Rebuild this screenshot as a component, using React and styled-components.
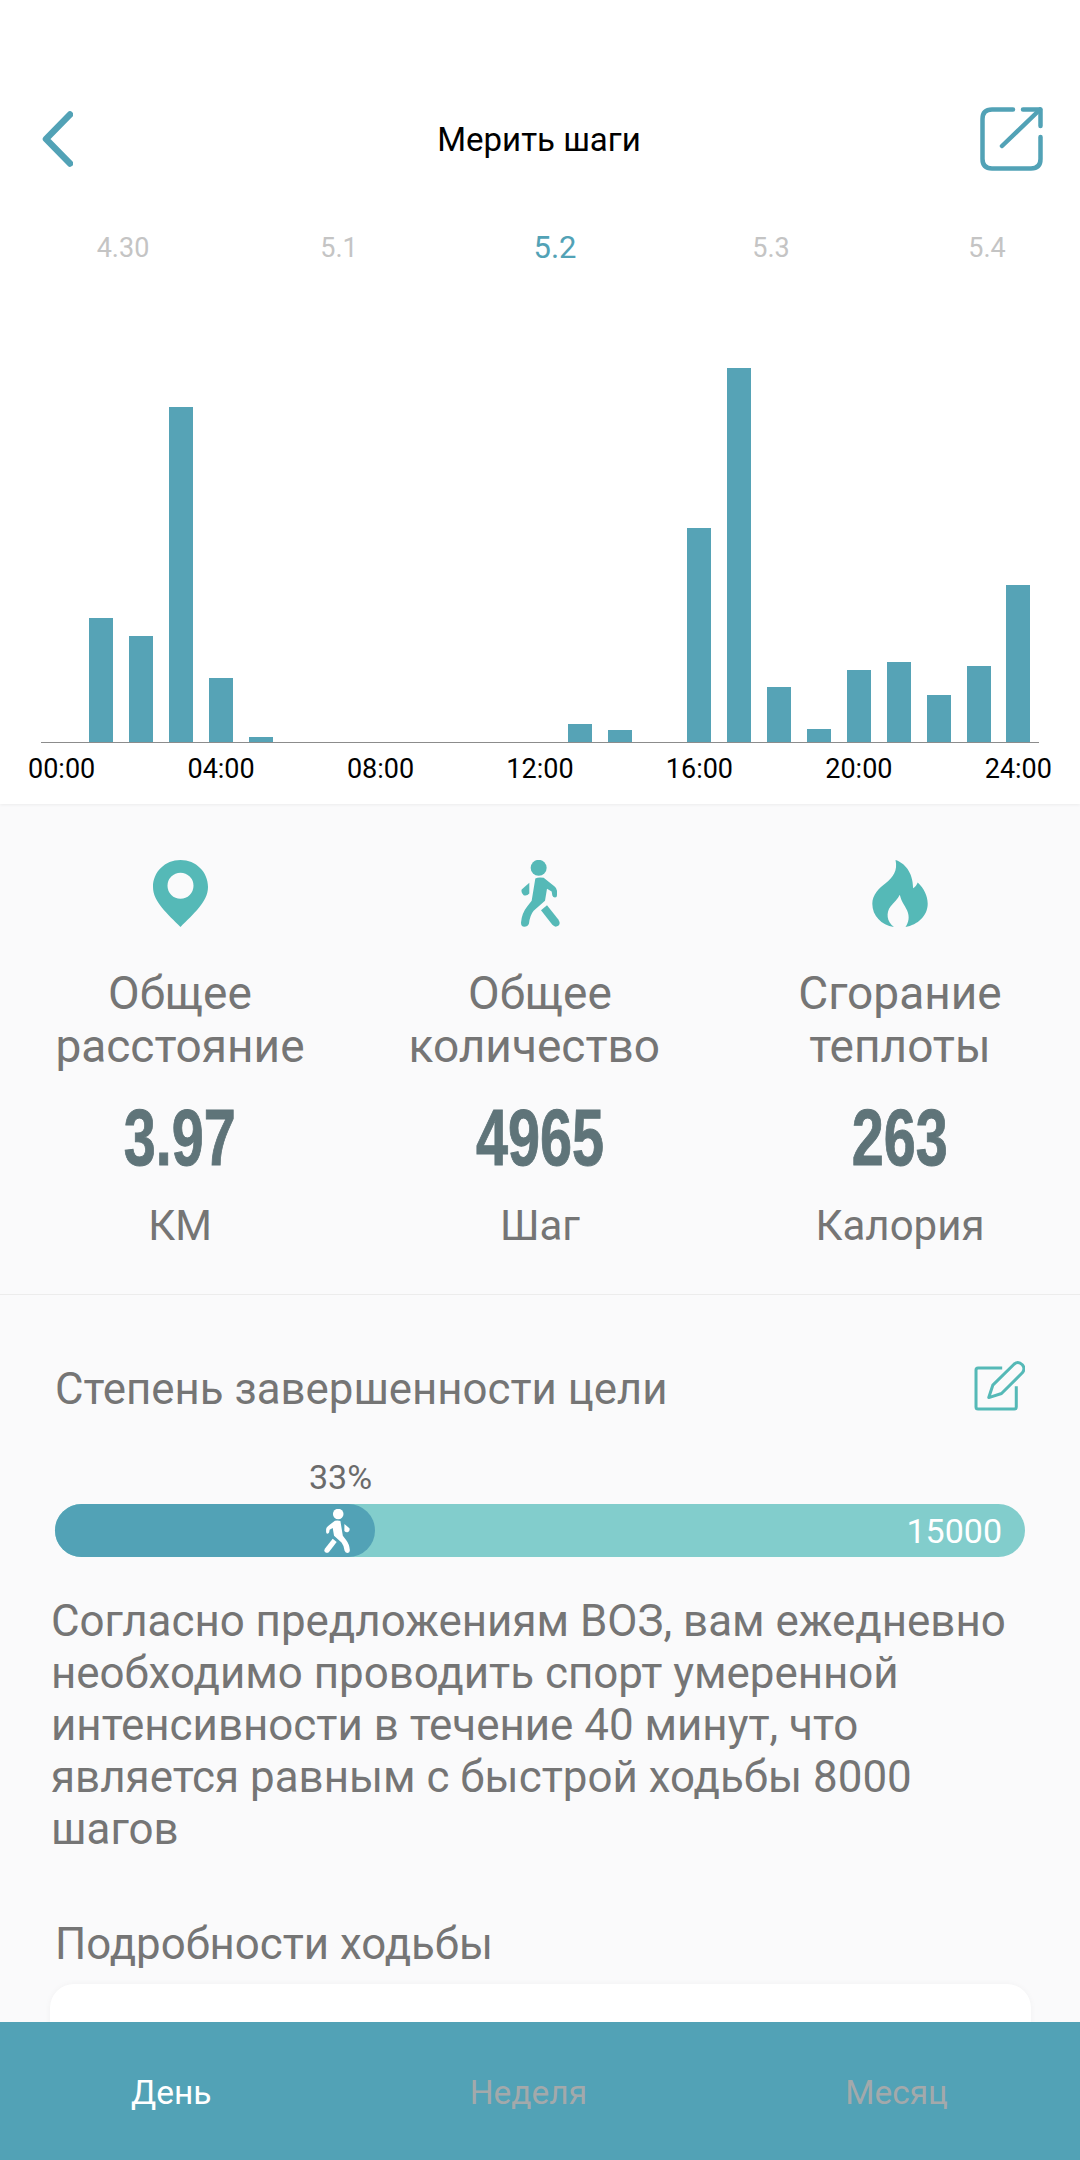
import React from 'react'
import styled, { createGlobalStyle } from 'styled-components'

const TEAL = '#52a2b6'
const MINT = '#55b9b7'

const GlobalStyle = createGlobalStyle`
    html, body {
        margin: 0;
        padding: 0;
        background: #fafafb;
        font-family: Roboto, "Noto Sans", sans-serif;
    }
`

const Screen = styled.div`
    display: flex;
    flex-direction: column;
    width: 1080px;
    height: 2160px;
    overflow: hidden;
    background: #fafafb;
`

const Scroll = styled.div`
    flex: 1;
    min-height: 0;
    overflow: hidden;
`

const TopPanel = styled.section`
    position: relative;
    padding: 106px 0 19px;
    background: #fff;
    box-shadow: 0 1px 3px rgba(0, 0, 0, 0.06);
`

const Header = styled.header`
    display: grid;
    grid-template-columns: 1fr auto 1fr;
    align-items: center;
    height: 65px;
    padding: 0 44px 0 42px;
`

const Title = styled.h1`
    margin: 0;
    padding-top: 2px;
    color: #000;
    font-size: 33px;
    font-weight: 400;
`

const ShareWrap = styled.div`
    display: flex;
    justify-content: flex-end;
    margin-right: -7px;
`

const Dates = styled.div`
    display: flex;
    margin-top: 57px;
    padding-left: 15px;
    overflow: hidden;
`

const DateCell = styled.div`
    flex: 0 0 216px;
    height: 40px;
    line-height: 40px;
    text-align: center;
    color: ${props => props.$active ? TEAL : '#c4c4c4'};
    font-size: ${props => props.$active ? '31px' : '27px'};
`

const Bars = styled.div`
    display: flex;
    align-items: flex-end;
    gap: 15.9px;
    height: 374px;
    margin: 100px 41px 0;
    padding-left: 48px;
    border-bottom: 1px solid #8c8c8c;
`

const Bar = styled.div`
    flex: 0 0 24px;
    background: #56a3b6;
`

const AxisLabels = styled.div`
    display: flex;
    justify-content: space-between;
    margin-top: 10px;
    padding: 0 28px;
    color: #000;
    font-size: 27px;
    line-height: 32px;
`

const Stats = styled.section`
    display: grid;
    grid-template-columns: repeat(3, 1fr);
    padding: 56px 0 41px;
    border-bottom: 1px solid #ececec;
`

const Stat = styled.div`
    display: flex;
    flex-direction: column;
    align-items: center;
`

const IconSlot = styled.div`
    display: flex;
    align-items: center;
    justify-content: center;
    height: 67px;
    margin-bottom: 40px;
`

const StatLabel = styled.div`
    color: #757575;
    font-size: 46px;
    line-height: 53px;
    text-align: center;
    white-space: pre;
`

const StatValue = styled.div`
    display: flex;
    align-items: center;
    justify-content: center;
    box-sizing: border-box;
    height: 126px;
    padding-top: 4px;
    color: #5f7479;
    font-family: "Liberation Sans", sans-serif;
    font-size: 80px;
    font-weight: 700;
    -webkit-text-stroke: 1px #5f7479;
    transform: scaleX(0.72);
`

const StatUnit = styled.div`
    color: #757575;
    font-size: 42px;
    line-height: 54px;
`

const Goal = styled.section`
    padding: 67px 55px 0;
`

const GoalHead = styled.div`
    display: flex;
    align-items: center;
    justify-content: space-between;
    height: 54px;
`

const SectionTitle = styled.h2`
    margin: 0;
    color: #757575;
    font-size: 43.8px;
    font-weight: 400;
    line-height: 54px;
`

const Percent = styled.div`
    width: ${props => props.$value}%;
    margin-top: 43px;
    padding-right: 3px;
    box-sizing: border-box;
    color: #6b6b6b;
    font-size: 34px;
    line-height: 36px;
    text-align: right;
`

const Track = styled.div`
    display: flex;
    align-items: center;
    height: 53px;
    margin-top: 9px;
    border-radius: 27px;
    background: #82cdcc;
    color: #fff;
    font-size: 34px;
`

const Fill = styled.div`
    display: flex;
    align-items: center;
    justify-content: flex-end;
    box-sizing: border-box;
    width: ${props => props.$value}%;
    height: 100%;
    padding-right: 24px;
    border-radius: 27px;
    background: ${TEAL};
`

const Total = styled.span`
    margin-left: auto;
    padding-right: 23px;
`

const Advice = styled.p`
    margin: 38px 0 0 -4px;
    color: #757575;
    font-size: 43.9px;
    line-height: 52px;
`

const Details = styled.section`
    padding: 62px 49px 0 50px;
`

const DetailsTitle = styled(SectionTitle)`
    padding-left: 5px;
`

const Card = styled.div`
    height: 120px;
    margin-top: 13px;
    border-radius: 24px;
    background: #fff;
    box-shadow: 0 0 6px rgba(0, 0, 0, 0.04);
`

const TabBar = styled.nav`
    display: flex;
    flex: 0 0 138px;
    align-items: center;
    justify-content: space-between;
    padding: 2px 132px 0 131px;
    box-sizing: border-box;
    background: ${TEAL};
    font-size: 33.5px;
`

const Tab = styled.div`
    color: ${props => props.$active ? '#fff' : '#a3a9ab'};
`

const Walker = styled.svg`
    display: block;
    width: ${props => props.$w}px;
    height: ${props => props.$h}px;
    transform: ${props => props.$flip ? 'scaleX(-1)' : 'none'};
    fill: ${props => props.$color};
`

const EditSvg = styled.svg`
    display: block;
    width: 52px;
    height: 52px;
    margin-bottom: 6px;
`

const WalkIcon = ({ w, h, color, flip }) => (
    <Walker $w={w} $h={h} $color={color} $flip={flip} viewBox="0 0 117 200">
        <circle cx="53" cy="23" r="24" />
        <path d="M43 55Q52 50 68 53L100 78Q108 84 108 92L108 105Q108 112 102 112Q96 112 94 106L92 94L78 86L72 122L38 152Q27 165 24 190Q20 200 10 200Q0 200 0 188Q2 160 18 140L32 122Z" />
        <path d="M25 68L25 100Q18 108 8 105Q-1 98 2 88Z" />
        <path d="M60 150L78 135L112 178Q120 190 112 197Q102 203 94 194Z" />
    </Walker>
)

const PinIcon = () => (
    <svg width="55" height="67" viewBox="0 0 55 67">
        <path
            fill={MINT}
            fillRule="evenodd"
            d="M27.5 0C12 0 0 12 0 27C0 42 15 54 27.5 67C40 54 55 42 55 27C55 12 43 0 27.5 0ZM27.5 12.7A13 13 0 1 1 27.5 38.7A13 13 0 1 1 27.5 12.7Z"
        />
    </svg>
)

const FlameIcon = () => (
    <svg width="56" height="67" viewBox="95 60 167 202">
        <path
            fill={MINT}
            d="M165 60C190 68 218 95 218 145C224 142 229 136 232 128C250 145 262 168 262 192C262 228 232 256 195 262C205 248 208 230 200 212C192 196 182 185 178 165C172 178 160 188 150 200C136 218 138 245 160 262C122 256 95 228 95 192C95 165 115 145 135 130C158 112 172 92 165 60Z"
        />
    </svg>
)

const BackIcon = () => (
    <svg width="31" height="56" viewBox="0 0 31 56" fill="none" stroke={TEAL} strokeWidth="6.5" strokeLinecap="round" strokeLinejoin="round">
        <path d="M28 3.5L4 28L28 52.5" />
    </svg>
)

const ShareIcon = () => (
    <svg width="63" height="64" viewBox="0 0 63 64" fill="none" stroke={TEAL} strokeWidth="4.5" strokeLinecap="round" strokeLinejoin="round">
        <path d="M33 2.5H12Q2.5 2.5 2.5 12V52Q2.5 61.5 12 61.5H51Q60.5 61.5 60.5 52V30" />
        <path d="M22 39L60 2.5" />
        <path d="M43 2.5H60.5V19" />
    </svg>
)

const EditIcon = () => (
    <EditSvg viewBox="25 30 155 155" fill="none" stroke={MINT} strokeWidth="9" strokeLinejoin="round">
        <path d="M112 54H40Q34 54 34 60V170Q34 176 40 176H148Q154 176 154 170V108" />
        <path d="M72 142L84 105L148 42Q160 32 172 44Q182 56 172 68L110 130Z" />
    </EditSvg>
)

const dates = ['4.30', '5.1', '5.2', '5.3', '5.4']
const heights = [124, 106, 335, 64, 5, 0, 0, 0, 0, 0, 0, 0, 18, 12, 0, 214, 374, 55, 13, 72, 80, 47, 76, 157]
const ticks = ['00:00', '04:00', '08:00', '12:00', '16:00', '20:00', '24:00']
const stats = [
    { icon: <PinIcon />, label: 'Общее\nрасстояние', value: '3.97', unit: 'КМ' },
    { icon: <WalkIcon w={39} h={67} color={MINT} />, label: 'Общее\nколичество ', value: '4965', unit: 'Шаг' },
    { icon: <FlameIcon />, label: 'Сгорание\nтеплоты', value: '263', unit: 'Калория' },
]
const progress = 33

const App = () => (
    <Screen>
        <GlobalStyle />
        <Scroll>
            <TopPanel>
                <Header>
                    <BackIcon />
                    <Title>Мерить шаги</Title>
                    <ShareWrap><ShareIcon /></ShareWrap>
                </Header>
                <Dates>
                    {dates.map(date => (
                        <DateCell key={date} $active={date === '5.2'}>{date}</DateCell>
                    ))}
                </Dates>
                <Bars>
                    {heights.map((height, i) => (
                        <Bar key={i} style={{ height }} />
                    ))}
                </Bars>
                <AxisLabels>
                    {ticks.map(tick => <span key={tick}>{tick}</span>)}
                </AxisLabels>
            </TopPanel>

            <Stats>
                {stats.map(stat => (
                    <Stat key={stat.value}>
                        <IconSlot>{stat.icon}</IconSlot>
                        <StatLabel>{stat.label}</StatLabel>
                        <StatValue>{stat.value}</StatValue>
                        <StatUnit>{stat.unit}</StatUnit>
                    </Stat>
                ))}
            </Stats>

            <Goal>
                <GoalHead>
                    <SectionTitle>Степень завершенности цели</SectionTitle>
                    <EditIcon />
                </GoalHead>
                <Percent $value={progress}>{progress}%</Percent>
                <Track>
                    <Fill $value={progress}>
                        <WalkIcon w={28} h={44} color="#fff" flip />
                    </Fill>
                    <Total>15000</Total>
                </Track>
                <Advice>
                    Согласно предложениям ВОЗ, вам ежедневно необходимо проводить спорт умеренной интенсивности в течение 40 минут, что является равным с быстрой ходьбы 8000 шагов
                </Advice>
            </Goal>

            <Details>
                <DetailsTitle>Подробности ходьбы</DetailsTitle>
                <Card />
            </Details>
        </Scroll>
        <TabBar>
            <Tab $active>День</Tab>
            <Tab>Неделя</Tab>
            <Tab>Месяц</Tab>
        </TabBar>
    </Screen>
)

export default App
